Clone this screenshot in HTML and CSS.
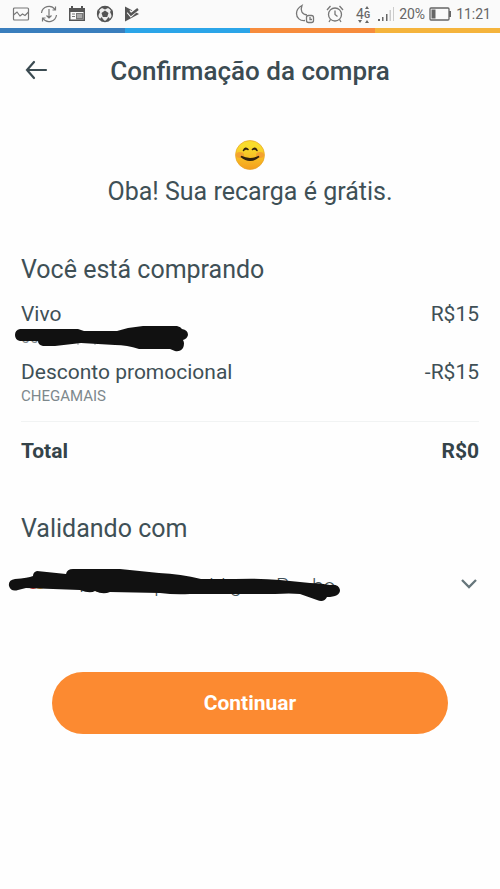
FILE: index.html
```html
<!DOCTYPE html>
<html lang="pt-BR">
<head>
<meta charset="utf-8">
<meta name="viewport" content="width=device-width, initial-scale=1">
<title>Confirmação da compra</title>
<link rel="stylesheet" href="styles.css">
</head>
<body>
<div class="status">
  <div class="status-left">
    <svg width="18" height="16" viewBox="0 0 18 16" fill="none" stroke="#777" stroke-width="1.2"><rect x="1.500" y="2" width="15" height="12" rx="1"/><path d="M1.500 9 5 6l3 4 2.500-2L13 9.500 16.500 6"/></svg>
    <svg width="18" height="18" viewBox="0 0 18 18" fill="none" stroke="#777" stroke-width="1.2"><path d="M9 4v9M6.500 10.500 9 13l2.500-2.500M1.500 8A7.500 7.500 0 0 1 15 4.500M16.500 10A7.500 7.500 0 0 1 3 13.500M15.500 1.500v3.500h-3M2.500 16.500V13h3"/></svg>
    <svg width="18" height="18" viewBox="0 0 18 18"><path fill="#555" fill-rule="evenodd" d="M1 3h2V1h2v2h8V1h2v2h2v13H1zM2.500 7v7.500h13V7z"/><path fill="#777" d="M4 8.500h3v1H4zM4 11h3v1H4zM8 8h7.500v6.500H8z"/><path d="M9 10h5M9 12h5" stroke="#ddd"/></svg>
    <svg width="18" height="18" viewBox="0 0 18 18"><circle cx="9" cy="9" r="7.500" fill="#eee" stroke="#555" stroke-width="1.300"/><path fill="#555" d="m9 5.500 3.500 2.500-1.300 4H6.800L5.500 8zM5 2.500 9 1l4 1.500L9 4.500zM1 8l1-4 2 3-2 4zM17 8l-1-4-2 3 2 4zM4 14l1.500-2 3 4-3 .5zM14 14l-1.500-2-3 4 3 .5z"/></svg>
    <svg width="16" height="18" viewBox="0 0 16 18"><path fill="#555" d="M1 1.500 15 9 1 16.500z"/><path d="m4.500 6.500 2.500 3L14 3" stroke="#fafafa" stroke-width="4.500" fill="none"/><path d="m4 6 3 3.500L14 4" stroke="#555" stroke-width="2.400" fill="none"/></svg>
  </div>
  <div class="status-right">
    <svg width="20" height="20" viewBox="0 0 20 20" fill="none" stroke="#777" stroke-width="1.300"><path d="M10 16.500C5 17 1.500 14 1.500 9.500c0-3.500 2-6 5.500-8-2 5 0 9 5 9.500"/><rect x="11.500" y="11.500" width="7" height="7" rx="2"/><path d="M15 13v2.500h2"/></svg>
    <svg width="18" height="18" viewBox="0 0 18 18" fill="none" stroke="#777" stroke-width="1.300"><circle cx="9" cy="9.500" r="6.500"/><path d="M9 5.500v4l2.500 2M1 5l3.500-4M17 5l-3.500-4M4.500 14.500 3 17M13.500 14.500 15 17"/></svg>
    <svg width="18" height="20" viewBox="0 0 18 20" fill="#666"><text x="1" y="15" font-size="14">4</text><text x="9" y="14" font-size="9" font-weight="700">G</text><path d="m10 5 2-3 2 3zM10 19l2-3 2 3zM3 16h4l-2 3z"/></svg>
    <svg width="18" height="16" viewBox="0 0 18 16" fill="#666"><path d="M1 13h2v2H1zM5 11h1.500v4H5zM9 8h1.500v7H9z"/><path fill="#ccc" d="M12.500 4H14v11h-1.500zM16 1h1v14h-1z"/></svg>
    <span>20%</span>
    <svg width="23" height="14" viewBox="0 0 23 14"><rect x="1" y="1" width="19" height="12" rx="1" fill="none" stroke="#666" stroke-width="1.300"/><path fill="#666" d="M2.500 2.500h4v9h-4zM20 4h2v6h-2z"/></svg>
    <span>11:21</span>
  </div>
</div>
<div class="stripe"><i></i><i></i><i></i><i></i></div>
<header class="top">
  <button class="back" type="button" aria-label="Voltar"><svg width="24" height="20" viewBox="0 0 24 20" fill="none" stroke="#3b4b52" stroke-width="2.200" stroke-linecap="round"><path d="M22 9H3M10 1 3 9l7 8"/></svg></button>
  <h1>Confirmação da compra</h1>
</header>
<main>
  <section class="message">
    <svg width="32" height="32" viewBox="0 0 32 32"><defs><linearGradient id="face" x2="0" y2="1"><stop offset=".2" stop-color="#f8dc2c"/><stop offset="1" stop-color="#f59d1c"/></linearGradient></defs><circle cx="16" cy="16" r="14.500" fill="url(#face)" stroke="#e8a325" stroke-width=".7"/><ellipse cx="6" cy="16" rx="4" ry="3" fill="#f28a35" opacity=".6"/><ellipse cx="26" cy="16" rx="4" ry="3" fill="#f28a35" opacity=".6"/><path d="M9.500 11.500q2-4 4.500-1M18.500 10.500q2.500-3 4.500 1M7 17.500q9 7.500 18 0-9 4.500-18 0z" fill="#30200d" fill-opacity=".8" stroke="#30200d" stroke-width="1.600" stroke-linecap="round"/></svg>
    <p>Oba! Sua recarga é grátis.</p>
  </section>
  <section class="order">
    <h2>Você está comprando</h2>
    <div class="item"><span>Vivo</span><span>R$15</span></div>
    <div class="hidden-number">
      <svg width="190" height="30" viewBox="0 0 190 30"><text x="21" y="15" font-size="16" fill="#7d888c">00</text><path d="M78 13v4M95 13v4" stroke="#9aa3a6"/><path fill="#111" d="M20 1h58l6 2h33l11-3 15-2h34q4 1 5 3 6 1 6 6-1 4-5 5 2 3 0 8-3 4-8 3l-5-2h-31q-12-4-24-4l-34-2-26 3H43q-5-1-5-5H20q-5-1-5-6t5-6z"/></svg>
    </div>
    <div class="item"><span>Desconto promocional</span><span>-R$15</span></div>
    <p class="code">CHEGAMAIS</p>
    <div class="item total"><span>Total</span><span>R$0</span></div>
  </section>
  <section class="payment">
    <h2>Validando com</h2>
    <button class="method" type="button" aria-label="Escolher forma de validação">
      <svg class="scribble" width="342" height="40" viewBox="0 0 342 40"><circle cx="33" cy="19" r="6" fill="#d9342b"/><circle cx="40" cy="19" r="6" fill="#f3a51f"/><g font-size="21" font-weight="300" fill="#3f5056"><text x="79" y="28">Nas</text><text x="147" y="28">q</text><text x="202" y="29">d</text><text x="221" y="29">l</text><text x="230" y="28">g</text><text x="276" y="29">P</text><text x="312" y="29">ho</text></g><path fill="#111" d="M15 15Q8 16 9 22q2 6 9 4l8-2 54 2q10 4 15 1 8 4 15 1l50 1q15 2 30 1h85q15-1 25 0l17 6q7 3 10-3 13 0 13-7-1-6-10-5-10-2-20-2l-30-3q-20-2-45-1h-34q-20-5-42-6l-39-4H73q-6 0-7 5l-29-3q-4 1-4 5-5 2-18 3z"/></svg>
      <svg width="18" height="12" viewBox="0 0 18 12" fill="none" stroke="#66767b" stroke-width="2.300"><path d="m2 2 7 7 7-7"/></svg>
    </button>
  </section>
  <button class="continue" type="button">Continuar</button>
</main>
</body>
</html>
```
FILE: styles.css
```css
* { box-sizing: border-box; }
body {
  margin: 0;
  background: #fefefe;
  color: #3f5056;
  font-family: Roboto, "Liberation Sans", sans-serif;
}
h1, h2, p { margin: 0; }
button { font-family: inherit; border: 0; padding: 0; background: none; cursor: pointer; }
svg { display: block; flex: none; overflow: visible; }
.status {
  display: flex;
  justify-content: space-between;
  align-items: center;
  height: 28px;
  padding: 0 9px 0 12px;
  background: #fafafa;
  color: #666;
  font-size: 14px;
}
.status-left { display: flex; align-items: center; gap: 10px; }
.status-right { display: flex; align-items: center; gap: 4px; }
.status-right svg:nth-child(-n+2) { margin-right: 7px; }
.stripe { display: grid; grid-template-columns: repeat(4, 1fr); height: 5px; }
.stripe i { background: #3a7ebd; }
.stripe i:nth-child(2) { background: #2ba5e8; }
.stripe i:nth-child(3) { background: #f78c3d; }
.stripe i:nth-child(4) { background: #f5b43c; }
.top {
  display: grid;
  grid-template-columns: 26px 1fr 26px;
  align-items: center;
  height: 76px;
  padding: 0 24px;
}
.top h1 { font-size: 26px; line-height: 32px; font-weight: 500; text-align: center; color: #3b4b52; }
main { padding: 0 21px 24px; }
.message { display: flex; flex-direction: column; align-items: center; gap: 4px; padding-top: 30px; }
.message p, h2 { font-size: 25px; line-height: 34px; font-weight: 400; text-align: center; }
.order h2, .payment h2 { text-align: left; }
.order { padding-top: 44px; }
.item { display: flex; justify-content: space-between; font-size: 21px; line-height: 28px; }
h2 + .item { margin-top: 13px; }
.hidden-number { height: 30px; margin-left: -21px; }
.code { font-size: 15px; line-height: 20px; color: #7d888c; }
.total { margin-top: 15px; padding-top: 15px; border-top: 1px solid #f1f3f3; font-weight: 700; color: #344349; }
.payment { padding-top: 47px; }
.method {
  display: flex;
  align-items: center;
  justify-content: space-between;
  width: 100%;
  margin-top: 18px;
}
.scribble { margin-left: -21px; }
.method svg:last-child { margin-right: 1px; }
.continue {
  display: block;
  width: calc(100% - 62px);
  height: 62px;
  margin: 68px auto 0;
  border-radius: 31px;
  background: #fc8a31;
  color: #fff;
  font-size: 21px;
  font-weight: 700;
}
```
